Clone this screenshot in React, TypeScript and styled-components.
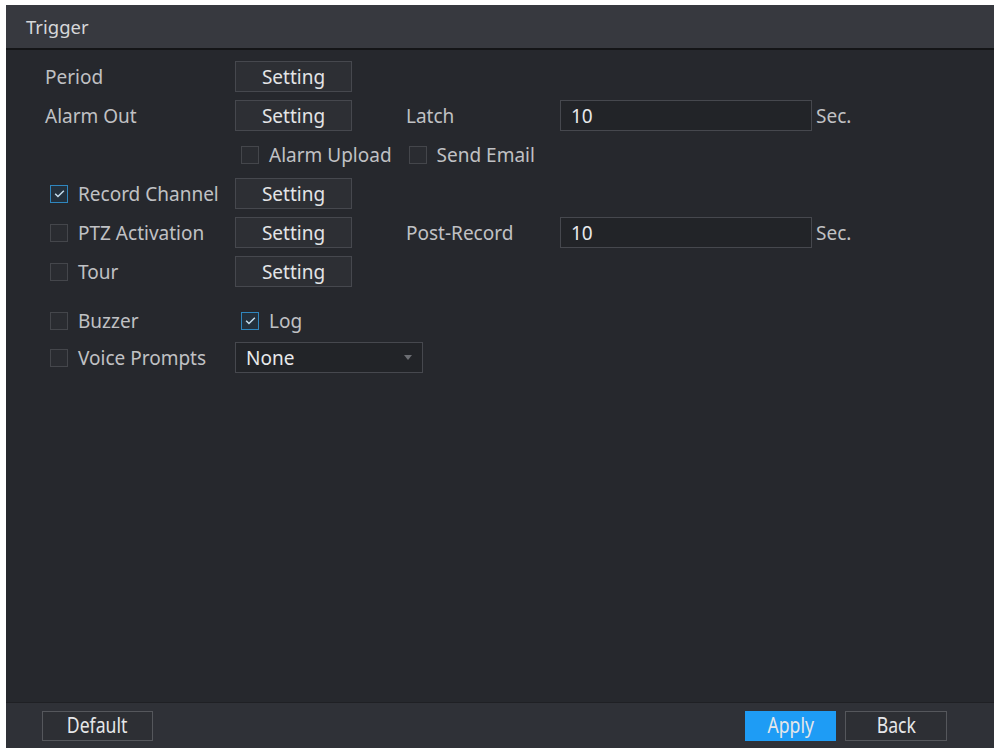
import React from "react";
import styled, { createGlobalStyle } from "styled-components";

const GlobalStyle = createGlobalStyle`
  html, body {
    margin: 0;
    padding: 0;
    background: #ffffff;
  }
  body {
    font-family: "Noto Sans", "Open Sans", sans-serif;
  }
`;

const Page = styled.div`
  width: 1001px;
  height: 748px;
  padding: 5px 7px 0 6px;
  box-sizing: border-box;
  background: #ffffff;
`;

const Panel = styled.div`
  height: 100%;
  display: flex;
  flex-direction: column;
  background: #26282d;
  color: #c0c1c4;
  font-size: 19px;
`;

const TitleBar = styled.div`
  height: 43px;
  flex-shrink: 0;
  display: flex;
  align-items: center;
  padding-left: 20px;
  background: #37393f;
  border-bottom: 2px solid #141517;
  color: #d6d7d9;
  font-size: 18.5px;
`;

const Body = styled.div`
  flex: 1;
  padding: 11px 0 0 39px;
  display: flex;
  flex-direction: column;
`;

const Row = styled.div<{ $gap?: number }>`
  display: flex;
  align-items: center;
  height: 31px;
  margin-bottom: ${(p) => p.$gap ?? 8}px;
`;

const LabelCell = styled.div<{ $check?: boolean }>`
  width: ${(p) => (p.$check ? 185 : 190)}px;
  padding-left: ${(p) => (p.$check ? 5 : 0)}px;
  display: flex;
  align-items: center;
  white-space: nowrap;
`;

const SideLabel = styled.div`
  width: 154px;
  padding-left: 54px;
  white-space: nowrap;
`;

const CheckGroup = styled.div`
  display: flex;
  align-items: center;
  gap: 17px;
  padding-left: 6px;
`;

const CheckWrap = styled.label`
  display: inline-flex;
  align-items: center;
  gap: 10px;
  white-space: nowrap;
`;

const Box = styled.span<{ $on?: boolean }>`
  width: 18px;
  height: 18px;
  flex-shrink: 0;
  box-sizing: border-box;
  border: 1px solid ${(p) => (p.$on ? "#2f86be" : "#44464b")};
  background: ${(p) => (p.$on ? "#23303c" : "#2a2c31")};
  display: inline-flex;
  align-items: center;
  justify-content: center;
`;

const Button = styled.div`
  width: 117px;
  height: 31px;
  box-sizing: border-box;
  display: flex;
  align-items: center;
  justify-content: center;
  border: 1px solid #46484e;
  background: #2d2f34;
  color: #e3e4e6;
`;

const Field = styled.div<{ $width: number }>`
  width: ${(p) => p.$width}px;
  height: 31px;
  box-sizing: border-box;
  display: flex;
  align-items: center;
  justify-content: space-between;
  padding: 0 10px 0 10px;
  border: 1px solid #46484e;
  background: #222428;
  color: #e8e9eb;
`;

const Unit = styled.span`
  margin-left: 4px;
`;

const Caret = styled.span`
  width: 0;
  height: 0;
  border-left: 4px solid transparent;
  border-right: 4px solid transparent;
  border-top: 5px solid #6c6e73;
`;

const Footer = styled.div`
  height: 45px;
  flex-shrink: 0;
  display: flex;
  align-items: center;
  gap: 9px;
  padding: 0 47px 0 36px;
  background: #2f3137;
  border-top: 1px solid #1f2024;
`;

const FooterButton = styled.div<{ $primary?: boolean; $width: number }>`
  width: ${(p) => p.$width}px;
  height: 30px;
  box-sizing: border-box;
  display: flex;
  align-items: center;
  justify-content: center;
  font-size: 21px;
  color: #e6e7e9;
  background: ${(p) => (p.$primary ? "#1e9cf5" : "#2d2f34")};
  border: 1px solid ${(p) => (p.$primary ? "#1e9cf5" : "#55575c")};
`;

// narrow caption used on the footer buttons
const Narrow = styled.span`
  display: inline-block;
  transform: scaleX(0.84);
  line-height: 1;
`;

const Spacer = styled.div`
  flex: 1;
`;

function Check({ on, label }: { on?: boolean; label: string }) {
  return (
    <CheckWrap>
      <Box $on={on}>
        {on && (
          <svg width="13" height="13" viewBox="0 0 12 12">
            <path d="M2 6.2l2.6 2.6L10 3.4" fill="none" stroke="#c4dcec" strokeWidth="1.4" />
          </svg>
        )}
      </Box>
      {label}
    </CheckWrap>
  );
}

export default function App() {
  return (
    <Page>
      <GlobalStyle />
      <Panel>
        <TitleBar>Trigger</TitleBar>
        <Body>
          <Row>
            <LabelCell>Period</LabelCell>
            <Button>Setting</Button>
          </Row>
          <Row>
            <LabelCell>Alarm Out</LabelCell>
            <Button>Setting</Button>
            <SideLabel>Latch</SideLabel>
            <Field $width={252}>10</Field>
            <Unit>Sec.</Unit>
          </Row>
          <Row>
            <LabelCell />
            <CheckGroup>
              <Check label="Alarm Upload" />
              <Check label="Send Email" />
            </CheckGroup>
          </Row>
          <Row>
            <LabelCell $check>
              <Check on label="Record Channel" />
            </LabelCell>
            <Button>Setting</Button>
          </Row>
          <Row>
            <LabelCell $check>
              <Check label="PTZ Activation" />
            </LabelCell>
            <Button>Setting</Button>
            <SideLabel>Post-Record</SideLabel>
            <Field $width={252}>10</Field>
            <Unit>Sec.</Unit>
          </Row>
          <Row $gap={18}>
            <LabelCell $check>
              <Check label="Tour" />
            </LabelCell>
            <Button>Setting</Button>
          </Row>
          <Row $gap={6}>
            <LabelCell $check>
              <Check label="Buzzer" />
            </LabelCell>
            <CheckGroup>
              <Check on label="Log" />
            </CheckGroup>
          </Row>
          <Row>
            <LabelCell $check>
              <Check label="Voice Prompts" />
            </LabelCell>
            <Field $width={188}>
              None
              <Caret />
            </Field>
          </Row>
        </Body>
        <Footer>
          <FooterButton $width={111}>
            <Narrow>Default</Narrow>
          </FooterButton>
          <Spacer />
          <FooterButton $primary $width={91}>
            <Narrow>Apply</Narrow>
          </FooterButton>
          <FooterButton $width={102}>
            <Narrow>Back</Narrow>
          </FooterButton>
        </Footer>
      </Panel>
    </Page>
  );
}
